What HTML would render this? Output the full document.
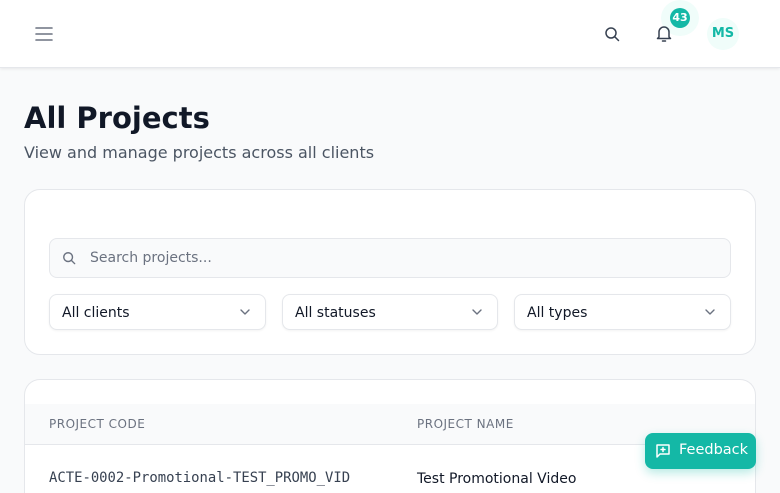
<!DOCTYPE html>
<html style="overflow:hidden;width:780px;height:493px"><head><style>
*{box-sizing:border-box;margin:0;padding:0}
body{width:780px;height:493px;overflow:hidden;background:#f9fafb;font-family:"DejaVu Sans","Liberation Sans",sans-serif;color:#111827;position:relative}
.hdr{position:absolute;left:0;top:0;width:780px;height:68px;background:#fff;border-bottom:1px solid #e5e7eb;box-shadow:0 1px 3px rgba(0,0,0,.08)}
.abs{position:absolute}
h1{position:absolute;left:24px;top:101px;font-size:29px;font-weight:bold;color:#111827}
.sub{position:absolute;left:24px;top:143px;font-size:16px;color:#4b5563}
.card{position:absolute;left:24px;width:732px;background:#fff;border:1px solid #e5e7eb;border-radius:16px}
.inp{position:absolute;left:49px;top:238px;width:682px;height:40px;background:#f9fafb;border:1px solid #e5e7eb;border-radius:8px;font-size:14px;color:#6b7280;padding:11px 0 0 40px}
.sel{position:absolute;top:294px;height:36px;background:#fff;border:1px solid #e5e7eb;border-radius:8px;font-size:14px;color:#111827;padding:10px 0 0 12px;box-shadow:0 1px 2px rgba(0,0,0,.05)}
.sel svg{position:absolute;right:14px;top:11px}
.th{position:absolute;font-size:12px;color:#6b7280;letter-spacing:.5px;top:417px}
</style></head><body>
<div class="hdr">
<svg class="abs" style="left:34px;top:24px" width="20" height="20" viewBox="0 0 20 20" fill="none" stroke="#6b7280" stroke-width="1.6" stroke-linecap="round"><path d="M2 4h16M2 10h16M2 16h16"/></svg>
<svg class="abs" style="left:604px;top:26px" width="16" height="16" viewBox="0 0 16 16" fill="none" stroke="#374151" stroke-width="1.5" stroke-linecap="round"><circle cx="7" cy="7" r="5"/><path d="M11 11l3.5 3.5"/></svg>
<div class="abs" style="left:661px;top:0;width:38px;height:36px;border-radius:50%;background:#f0fdfa"></div>
<svg class="abs" style="left:654px;top:23px" width="20" height="20" viewBox="0 0 20 20" fill="none" stroke="#374151" stroke-width="1.5" stroke-linecap="round" stroke-linejoin="round"><path d="M5 14V9a5 5 0 0110 0v5l1.5 1.5h-13zM8.5 18h3"/></svg>
<div class="abs" style="left:670px;top:8px;width:20px;height:20px;border-radius:50%;background:#14b8a6;color:#fff;font-size:11px;font-weight:bold;text-align:center;line-height:20px">43</div>
<div class="abs" style="left:707px;top:18px;width:32px;height:32px;border-radius:50%;background:#f0fdfa;color:#14b8a6;font-size:13px;font-weight:bold;text-align:center;line-height:32px">MS</div>
</div>
<h1>All Projects</h1>
<div class="sub">View and manage projects across all clients</div>
<div class="card" style="top:189px;height:166px"></div>
<div class="inp">Search projects...</div>
<svg class="abs" style="left:62px;top:251px" width="14" height="14" viewBox="0 0 16 16" fill="none" stroke="#6b7280" stroke-width="1.6" stroke-linecap="round"><circle cx="7" cy="7" r="5"/><path d="M11 11l3.5 3.5"/></svg>
<div class="sel" style="left:49px;width:217px">All clients<svg width="12" height="12" viewBox="0 0 12 12" fill="none" stroke="#6b7280" stroke-width="1.4" stroke-linecap="round" stroke-linejoin="round"><path d="M2 4l4 4 4-4"/></svg></div>
<div class="sel" style="left:282px;width:216px">All statuses<svg width="12" height="12" viewBox="0 0 12 12" fill="none" stroke="#6b7280" stroke-width="1.4" stroke-linecap="round" stroke-linejoin="round"><path d="M2 4l4 4 4-4"/></svg></div>
<div class="sel" style="left:514px;width:217px">All types<svg width="12" height="12" viewBox="0 0 12 12" fill="none" stroke="#6b7280" stroke-width="1.4" stroke-linecap="round" stroke-linejoin="round"><path d="M2 4l4 4 4-4"/></svg></div>
<div class="card" style="top:379px;height:114px;overflow:hidden;border-bottom:none;border-radius:16px 16px 0 0"><div style="position:absolute;left:0;top:24px;width:732px;height:41px;background:#f9fafb;border-bottom:1px solid #e5e7eb"></div></div>
<div class="th" style="left:49px">PROJECT CODE</div>
<div class="th" style="left:417px">PROJECT NAME</div>
<div class="abs" style="left:49px;top:470px;font-family:'DejaVu Sans Mono','Liberation Mono',monospace;font-size:13.9px;color:#374151">ACTE-0002-Promotional-TEST_PROMO_VID</div>
<div class="abs" style="left:417px;top:471px;font-size:14px;color:#111827">Test Promotional Video</div>
<div class="abs" style="left:645px;top:433px;width:111px;height:36px;background:#14b8a6;border-radius:8px;box-shadow:0 4px 10px rgba(20,184,166,.3);color:#fff;font-size:14.5px;padding:9px 0 0 34px">Feedback</div>
<svg class="abs" style="left:655px;top:443px" width="16" height="16" viewBox="0 0 16 16" fill="none" stroke="#fff" stroke-width="1.5" stroke-linejoin="round"><path d="M2 2h12v9H5l-3 3z"/><path d="M8 4.5v4M6 6.5h4" stroke-linecap="round"/></svg>
</body></html>
